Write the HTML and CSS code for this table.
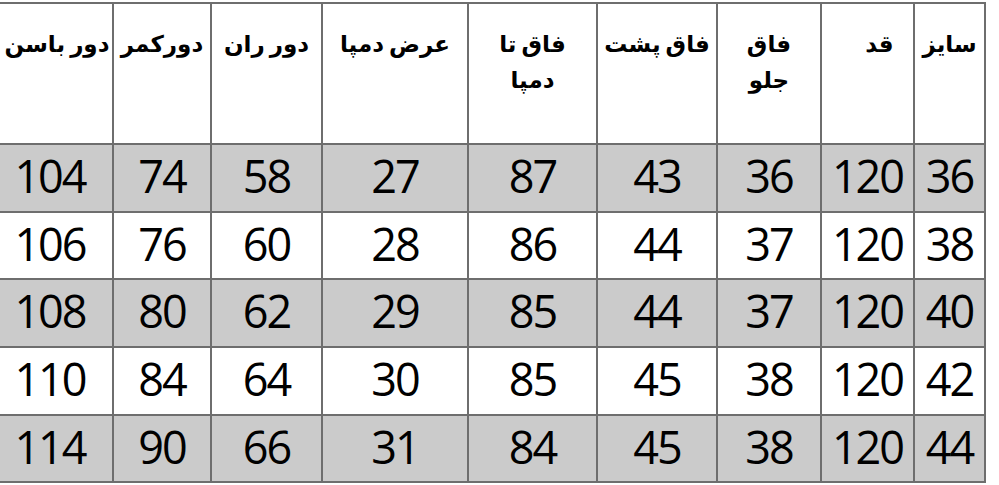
FILE: index.html
```html
<!DOCTYPE html>
<html lang="fa" dir="rtl">
<head>
<meta charset="utf-8">
<title>جدول سایز</title>
<link rel="stylesheet" href="styles.css">
</head>
<body>
<table class="size-table">
  <colgroup>
    <col class="c-size">
    <col class="c-qad">
    <col class="c-front">
    <col class="c-back">
    <col class="c-inseam">
    <col class="c-hem">
    <col class="c-thigh">
    <col class="c-waist">
    <col class="c-hip">
  </colgroup>
  <thead>
    <tr class="head-row">
      <th>سایز</th>
      <th class="shift">قد</th>
      <th>فاق<br>جلو</th>
      <th>فاق پشت</th>
      <th>فاق تا<br>دمپا</th>
      <th>عرض دمپا</th>
      <th>دور ران</th>
      <th>دورکمر</th>
      <th class="hip">دور باسن</th>
    </tr>
  </thead>
  <tbody>
    <tr class="shade"><td>36</td><td>120</td><td>36</td><td>43</td><td>87</td><td>27</td><td>58</td><td>74</td><td>104</td></tr>
    <tr><td>38</td><td>120</td><td>37</td><td>44</td><td>86</td><td>28</td><td>60</td><td>76</td><td>106</td></tr>
    <tr class="shade"><td>40</td><td>120</td><td>37</td><td>44</td><td>85</td><td>29</td><td>62</td><td>80</td><td>108</td></tr>
    <tr><td>42</td><td>120</td><td>38</td><td>45</td><td>85</td><td>30</td><td>64</td><td>84</td><td>110</td></tr>
    <tr class="shade"><td>44</td><td>120</td><td>38</td><td>45</td><td>84</td><td>31</td><td>66</td><td>90</td><td>114</td></tr>
  </tbody>
</table>
</body>
</html>
```

FILE: styles.css
```css
html, body {
  margin: 0;
  padding: 0;
  background: #ffffff;
  overflow: hidden;
}

body {
  width: 999px;
  height: 485px;
}

.size-table {
  direction: rtl;
  border-collapse: collapse;
  table-layout: fixed;
  width: 998px;
  margin-top: 2px;
  margin-right: 13px;
  margin-left: auto;
  color: #000;
}

.c-size { width: 71px; }
.c-qad { width: 93px; }
.c-front { width: 104px; }
.c-back { width: 120px; }
.c-inseam { width: 129px; }
.c-hem { width: 146px; }
.c-thigh { width: 111px; }
.c-waist { width: 98px; }
.c-hip { width: 126px; }

.size-table th,
.size-table td {
  border: 2px solid #6e6e6e;
  padding: 0;
  text-align: center;
  overflow: hidden;
  white-space: nowrap;
}

.head-row th {
  height: 141px;
  vertical-align: top;
  font-family: "DejaVu Sans", sans-serif;
  font-weight: bold;
  font-size: 23px;
  line-height: 36px;
  word-spacing: -3px;
  padding-top: 22px;
  box-sizing: border-box;
}

.head-row th.shift {
  padding-left: 24px;
}

.head-row th.hip {
  padding-left: 14px;
}

.size-table td {
  height: 67.7px;
  vertical-align: middle;
  font-family: "Open Sans", sans-serif;
  font-size: 45px;
  letter-spacing: -2px;
  line-height: 60px;
  padding-bottom: 4px;
  box-sizing: border-box;
}

.shade td {
  background: #cbcbcb;
}
```
